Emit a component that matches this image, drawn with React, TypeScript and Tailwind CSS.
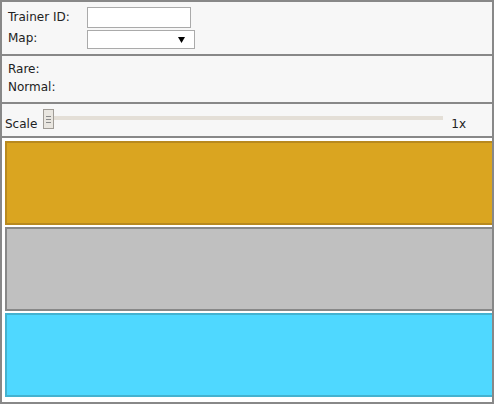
export default function App() {
  return (
    <div
      className="w-[494px] h-[404px] border-2 border-[#888888] bg-[#f7f7f7] flex flex-col text-[12px] text-[#222]"
      style={{ fontFamily: '"DejaVu Sans", Verdana, sans-serif' }}
    >
      {/* trainer + map */}
      <div className="h-[54px] shrink-0 border-b-2 border-[#888888] pt-[5px] pl-[6px]">
        <div className="grid grid-cols-[79px_auto] grid-rows-[21px_19px] gap-y-[2px] items-center">
          <span className="leading-[15px]">Trainer ID:</span>
          <input className="w-[104px] h-[21px] bg-white border border-[#aaaaaa] outline-none" />
          <span className="leading-[15px] -mt-[3px]">Map:</span>
          <div className="w-[108px] h-[19px] bg-white border border-[#aaaaaa] flex items-center justify-end pr-[9px]">
            <svg width="7" height="6" viewBox="0 0 7 6">
              <path d="M0 0 L7 0 L3.5 6 Z" fill="#000" />
            </svg>
          </div>
        </div>
      </div>

      {/* counts */}
      <div className="h-[48px] shrink-0 border-b-2 border-[#888888] pt-[4px] pl-[6px] leading-[18px]">
        <div>Rare:</div>
        <div>Normal:</div>
      </div>

      {/* scale slider */}
      <div className="h-[34px] shrink-0 border-b-2 border-[#888888] pt-[5px] pl-[3px] flex items-start">
        <span className="leading-[15px] mt-[8px]">Scale</span>
        <div className="relative w-[400px] h-[20px] ml-[6px]">
          <div className="absolute left-0 right-0 top-[7px] h-[4px] bg-[#e4dfd7]" />
          <div className="absolute left-0 top-0 w-[11px] h-[20px] bg-[#e9e6e0] border border-[#a09c96] flex flex-col items-center justify-center gap-[2px]">
            <div className="w-[5px] h-px bg-[#8a8a8a]" />
            <div className="w-[5px] h-px bg-[#8a8a8a]" />
            <div className="w-[5px] h-px bg-[#8a8a8a]" />
          </div>
        </div>
        <span className="leading-[15px] mt-[8px] ml-[8px]">1x</span>
      </div>

      {/* boxes */}
      <div className="flex-1 bg-white overflow-hidden pt-[3px] pl-[3px] flex flex-col gap-[2px]">
        <div className="w-[500px] h-[84px] shrink-0 bg-[#daa520] border-2 border-[#b8891e]" />
        <div className="w-[500px] h-[84px] shrink-0 bg-[#c0c0c0] border-2 border-[#888888]" />
        <div className="w-[500px] h-[84px] shrink-0 bg-[#4fd8ff] border-2 border-[#44b2d0]" />
      </div>
    </div>
  )
}
